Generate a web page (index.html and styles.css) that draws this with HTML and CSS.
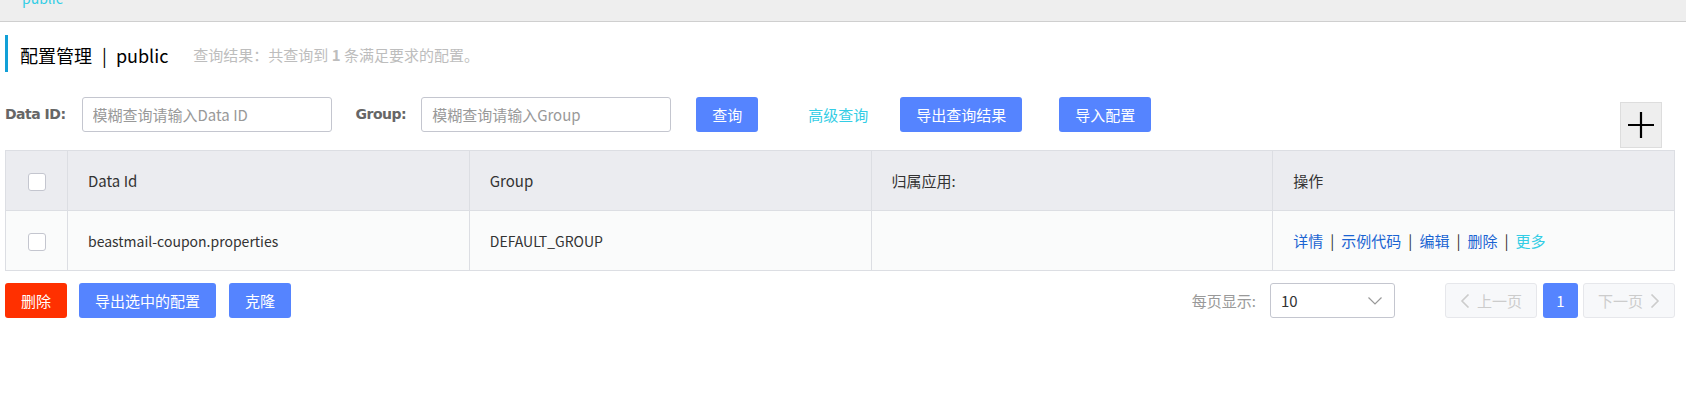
FILE: index.html
```html
<!DOCTYPE html>
<html lang="zh-CN">
<head>
<meta charset="utf-8">
<title>配置管理</title>
<link rel="stylesheet" href="styles.css">
</head>
<body>
<div class="topbar"><span class="ns-tab">public</span></div>
<div class="page">
  <div class="title-bar">
    <h3 class="title"><span>配置管理</span><span class="sep">|</span><span>public</span></h3>
    <span class="query-result">查询结果：共查询到 <b>1</b> 条满足要求的配置。</span>
  </div>

  <div class="search-row">
    <label class="field-label">Data ID:</label>
    <input class="text-input" type="text" placeholder="模糊查询请输入Data ID">
    <label class="field-label group-label">Group:</label>
    <input class="text-input" type="text" placeholder="模糊查询请输入Group">
    <button class="btn btn-primary btn-query">查询</button>
    <a class="adv-link">高级查询</a>
    <button class="btn btn-primary btn-export">导出查询结果</button>
    <button class="btn btn-primary btn-import">导入配置</button>
    <button class="add-btn" aria-label="新建">
      <svg width="26" height="26" viewBox="0 0 26 26"><path d="M0 13H26M13 0V26" stroke="#000" stroke-width="2.2" fill="none"/></svg>
    </button>
  </div>

  <table class="config-table">
    <colgroup>
      <col class="c-check"><col class="c-col"><col class="c-col"><col class="c-col"><col class="c-col">
    </colgroup>
    <thead>
      <tr>
        <th class="check-cell"><span class="checkbox"></span></th>
        <th>Data Id</th>
        <th>Group</th>
        <th>归属应用:</th>
        <th>操作</th>
      </tr>
    </thead>
    <tbody>
      <tr>
        <td class="check-cell"><span class="checkbox"></span></td>
        <td>beastmail-coupon.properties</td>
        <td>DEFAULT_GROUP</td>
        <td></td>
        <td class="ops"><a class="op">详情</a><span class="op-sep">|</span><a class="op">示例代码</a><span class="op-sep">|</span><a class="op">编辑</a><span class="op-sep">|</span><a class="op">删除</a><span class="op-sep">|</span><a class="op more">更多</a></td>
      </tr>
    </tbody>
  </table>

  <div class="footer-row">
    <div class="batch">
      <button class="btn btn-danger">删除</button>
      <button class="btn btn-primary btn-export-sel">导出选中的配置</button>
      <button class="btn btn-primary btn-clone">克隆</button>
    </div>
    <div class="pager">
      <span class="page-size-label">每页显示:</span>
      <div class="select">
        <span class="select-value">10</span>
        <svg class="select-arrow" width="14" height="8" viewBox="0 0 14 8"><path d="M0.5 0.5L7 7L13.5 0.5" stroke="#999" stroke-width="1.2" fill="none"/></svg>
      </div>
      <button class="page-btn page-prev"><svg width="10" height="14" viewBox="0 0 10 14"><path d="M8.5 0.5L2 7L8.5 13.5" stroke="#ccc" stroke-width="1.6" fill="none"/></svg><span>上一页</span></button>
      <button class="page-btn page-current">1</button>
      <button class="page-btn page-next"><span>下一页</span><svg width="10" height="14" viewBox="0 0 10 14"><path d="M1.5 0.5L8 7L1.5 13.5" stroke="#ccc" stroke-width="1.6" fill="none"/></svg></button>
    </div>
  </div>
</div>
</body>
</html>
```

FILE: styles.css
```css
* { box-sizing: border-box; }

html, body {
  margin: 0;
  padding: 0;
  background: #fff;
  font-family: "Noto Sans CJK SC", "Noto Sans", sans-serif;
  color: #333;
}

.topbar {
  height: 22px;
  background: #eeeeee;
  border-bottom: 1px solid #cfcfcf;
  overflow: hidden;
  padding-left: 22px;
}

.ns-tab {
  display: block;
  font-size: 14px;
  line-height: 14px;
  margin-top: -9px;
  color: #33cde5;
}

.page {
  width: 1675px;
  padding-left: 5px;
}

.title-bar {
  margin-top: 13px;
  height: 37px;
  border-left: 3px solid #12a0d7;
  padding-left: 12px;
  display: flex;
  align-items: center;
  padding-top: 2px;
}

.title {
  margin: 0;
  font-size: 18px;
  font-weight: normal;
  color: #000;
  display: flex;
  align-items: center;
}

.title .sep {
  margin: 0 9px 0 10px;
}

.query-result {
  margin-left: 25px;
  font-size: 15px;
  color: #bdbdbd;
}

.query-result b {
  font-weight: bold;
}

.search-row {
  margin-top: 25px;
  display: flex;
  align-items: flex-start;
}

.field-label {
  font-family: "DejaVu Sans", sans-serif;
  font-weight: bold;
  font-size: 14px;
  letter-spacing: -0.5px;
  color: #666;
  height: 35px;
  line-height: 35px;
  margin-right: 16px;
}

.group-label {
  margin-left: 24px;
  margin-right: 15px;
}

.text-input {
  width: 250px;
  height: 35px;
  border: 1px solid #c4c6cf;
  border-radius: 3px;
  padding: 0 10px;
  font-family: "Noto Sans CJK SC", sans-serif;
  font-size: 15px;
  color: #333;
  outline: none;
}

.text-input::placeholder {
  color: #999;
}

.btn {
  height: 35px;
  border: none;
  border-radius: 3px;
  padding: 0 16px;
  font-family: "Noto Sans CJK SC", sans-serif;
  font-size: 15px;
  color: #fff;
  cursor: pointer;
}

.btn-primary { background: #5584ff; }
.btn-danger { background: #ff3000; }

.btn-query { margin-left: 25px; }

.adv-link {
  margin-left: 50px;
  line-height: 35px;
  font-size: 15px;
  color: #33cde5;
}

.btn-export { margin-left: 32px; }
.btn-import { margin-left: 37px; }

.add-btn {
  margin-left: auto;
  margin-right: 13px;
  margin-top: 5px;
  width: 42px;
  height: 46px;
  background: #eeeeee;
  border: 1px solid #dddddd;
  padding: 0;
  display: flex;
  align-items: center;
  justify-content: center;
}

.config-table {
  margin-top: 2px;
  width: 1670px;
  border-collapse: collapse;
  table-layout: fixed;
  font-size: 14px;
  color: #333;
}

.c-check { width: 62px; }

.config-table th,
.config-table td {
  border: 1px solid #dcdee3;
  height: 60px;
  padding: 0 0 0 20px;
  text-align: left;
  font-weight: normal;
  vertical-align: middle;
}

.config-table th {
  background: #ebecf0;
  font-size: 15px;
}

.config-table td {
  background: #fafbfb;
}

.config-table .check-cell {
  padding: 0;
  text-align: center;
}

.checkbox {
  display: inline-block;
  width: 18px;
  height: 18px;
  border: 1px solid #c4c6cf;
  border-radius: 3px;
  background: #fff;
  vertical-align: middle;
}

.config-table td.ops {
  font-size: 15px;
}

.ops .op {
  color: #1a64d2;
}

.ops .op.more {
  color: #33cde5;
}

.op-sep {
  margin: 0 7px;
  color: #333;
}

.footer-row {
  margin-top: 12px;
  display: flex;
  align-items: center;
  justify-content: space-between;
}

.batch {
  display: flex;
  gap: 12px;
}

.batch .btn-clone { margin-left: 1px; }

.pager {
  display: flex;
  align-items: center;
}

.page-size-label {
  font-size: 15px;
  color: #999;
  margin-right: 14px;
}

.select {
  width: 125px;
  height: 35px;
  border: 1px solid #c4c6cf;
  border-radius: 3px;
  display: flex;
  align-items: center;
  justify-content: space-between;
  padding: 0 12px 0 10px;
  font-size: 15px;
  color: #333;
}

.page-btn {
  height: 35px;
  border-radius: 3px;
  font-family: "Noto Sans CJK SC", sans-serif;
  font-size: 15px;
  display: flex;
  align-items: center;
  justify-content: center;
  gap: 7px;
  padding: 0;
}

.page-prev,
.page-next {
  width: 92px;
  background: #f7f8fa;
  border: 1px solid #e6e7eb;
  color: #ccc;
}

.page-prev { margin-left: 50px; }

.page-current {
  width: 35px;
  margin: 0 5px 0 6px;
  background: #5584ff;
  border: none;
  color: #fff;
}
```
